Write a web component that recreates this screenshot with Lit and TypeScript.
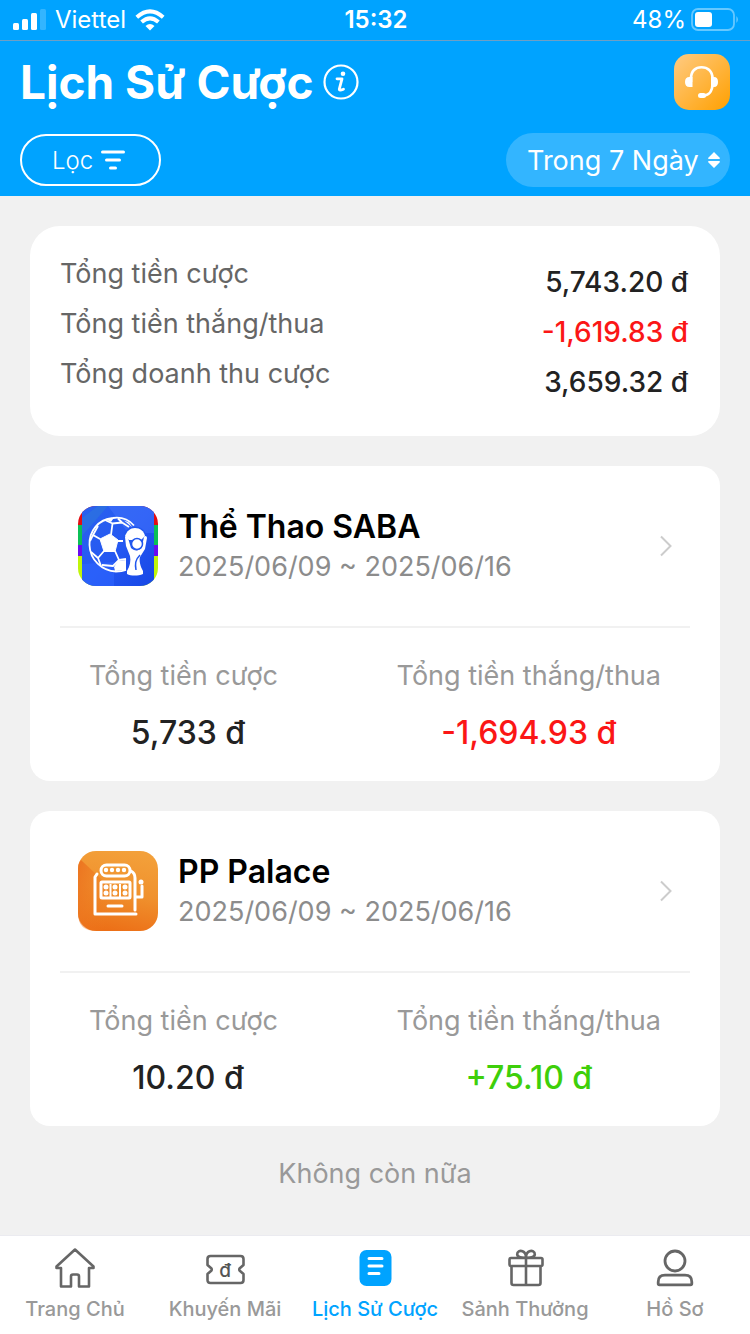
import { LitElement, html, css, TemplateResult } from "lit";
import { customElement, property, state } from "lit/decorators.js";
import { classMap } from "lit/directives/class-map.js";

type Tone = "plain" | "loss" | "win";

interface Amount {
  label: string;
  value: string;
  tone: Tone;
}

interface Provider {
  name: string;
  period: string;
  icon: TemplateResult;
  totals: Amount[];
}

interface Tab {
  label: string;
  icon: TemplateResult;
}

const sportsIcon = html`
  <svg viewBox="0 0 80 80" width="80" height="80" aria-hidden="true">
    <defs>
      <clipPath id="tile"><rect width="80" height="80" rx="18" /></clipPath>
      <linearGradient id="blue" x1="0" y1="0" x2="1" y2="1">
        <stop offset="0" stop-color="#2a62ee" />
        <stop offset="0.5" stop-color="#2558f2" />
        <stop offset="1" stop-color="#1747e6" />
      </linearGradient>
    </defs>
    <g clip-path="url(#tile)">
      <rect width="80" height="19" fill="#e30d12" />
      <rect y="19" width="80" height="20" fill="#0bc056" />
      <rect y="39" width="80" height="11" fill="#6a0bf0" />
      <rect y="50" width="80" height="30" fill="#c0f50a" />
      <path d="M4 0H76V80H4Z" fill="url(#blue)" />
      <path d="M4 12L20 0H30L4 30Z" fill="#2d7bd8" opacity=".5" />
      <path d="M30 0H76V27H50Z" fill="#4a7bff" opacity=".4" />
      <path d="M4 58L36 56V80H4Z" fill="#2f66ff" opacity=".6" />
    </g>
    <g fill="none" stroke="#fff" stroke-width="1.800" stroke-linejoin="round">
      <path d="M56 19.500C50 13 42 11 35 12C20 13.500 11 25 11.500 39C12 54 24 65 38 65.500Q44 65.500 48 64" />
      <path d="M33 29L34.500 17.500L27 14M34.500 17.500L44 16.500L51 21M44 16.500L40 12.500M22 33L15 29L12 35M15 29L20 20M26 45L20 52L13 46M20 52L23 60M37 45L41 54L35 60L24 59M41 54L48 53M39 35H45" />
    </g>
    <path d="M22 33L32 28L40 34L37 45.500H26Z" fill="#fff" stroke="#fff" stroke-linejoin="round" />
    <path d="M40 55L48 54V64L37 65L36 61ZM27 13L36 11.500L33 16ZM46 14.500L51 16.500L54 21Z" fill="#fff" />
    <circle cx="57" cy="32" r="11.500" fill="#2157ee" />
    <path d="M57 22C62 22 66 25 67 30L63 34H51L47 30C49 25 52 22 57 22Z" fill="#fff" />
    <path d="M47 31C47 30 50 30 50 32L53 42C57 46 62 45 64 40L66 31C67 29 69 30 69 32L67 43L62 51C61 54 62 60 65 65V68C60 70 53 70 49 68V65C52 60 53 55 52 50L48 40Z" fill="#fff" />
    <circle cx="59" cy="38" r="5.500" fill="#fff" stroke="#2157ee" stroke-width="1.500" />
    <path d="M62 49C57 54 57 58 58 64" stroke="#2157ee" stroke-width="1.500" fill="none" />
  </svg>
`;

const slotIcon = html`
  <svg viewBox="0 0 80 80" width="80" height="80" aria-hidden="true">
    <defs>
      <linearGradient id="orange" x1=".6" y1="0" x2=".4" y2="1">
        <stop offset="0" stop-color="#f3a03a" />
        <stop offset=".5" stop-color="#f0912d" />
        <stop offset="1" stop-color="#ec6f17" />
      </linearGradient>
      <linearGradient id="shade" x1="0" y1="0" x2="1" y2=".6">
        <stop offset="0" stop-color="#ec7420" />
        <stop offset="1" stop-color="#ee7d22" stop-opacity="0" />
      </linearGradient>
    </defs>
    <rect width="80" height="80" rx="18" fill="url(#orange)" />
    <path d="M3 9L36 40V80H18Q0 80 0 62V18Q0 12 3 9Z" fill="url(#shade)" />
    <g fill="none" stroke="#fff" stroke-width="3" stroke-linecap="round" stroke-linejoin="round">
      <rect x="23" y="14" width="29" height="11" rx="5.500" />
      <path d="M19 23L17 26V63H58M53 20Q57 22 57 27V59M58 46H64V35" />
      <rect x="23" y="31" width="29" height="16" rx="1" />
      <path d="M30 55H44" />
    </g>
    <g fill="#fff">
      <circle cx="63" cy="31" r="2.500" />
      <circle cx="28" cy="19" r="2.200" /><circle cx="34" cy="19" r="2.200" />
      <circle cx="40" cy="19" r="2.200" /><circle cx="46" cy="19" r="2.200" />
      <circle cx="28" cy="36" r="2.500" /><circle cx="37" cy="36" r="2.500" /><circle cx="47" cy="36" r="2.500" />
      <circle cx="28" cy="42" r="2.500" /><circle cx="37" cy="42" r="2.500" /><circle cx="47" cy="42" r="2.500" />
      <path d="M31.500 33H33.500V46H31.500ZM41 33H43V46H41Z" />
    </g>
  </svg>
`;

const homeIcon = html`
  <svg viewBox="0 0 40 40" width="40" height="40" fill="none" stroke="#666" stroke-width="2.600" stroke-linejoin="round" aria-hidden="true">
    <path d="M20 1.500L1.500 18.500V20H6V38.500H16V28.500Q16 26.500 18 26.500H22Q24 26.500 24 28.500V38.500H34V20H38.500V18.500Z" />
  </svg>
`;

const couponIcon = html`
  <svg viewBox="0 0 40 40" width="40" height="40" aria-hidden="true">
    <path d="M5.500 8H35.500Q38.500 8 38.500 11V17L34.500 20.500Q34 21.500 34.500 22.500L38.500 26V32Q38.500 35 35.500 35H5.500Q2.500 35 2.500 32V26L6.500 22.500Q7 21.500 6.500 20.500L2.500 17V11Q2.500 8 5.500 8Z" fill="none" stroke="#666" stroke-width="2.600" stroke-linejoin="round" />
    <text x="20" y="29" text-anchor="middle" font-family="Inter, sans-serif" font-size="19" font-weight="500" fill="#555">đ</text>
  </svg>
`;

const historyIcon = html`
  <svg viewBox="0 0 40 40" width="40" height="40" aria-hidden="true">
    <rect x="4.500" y="2" width="32" height="36" rx="7" fill="#00a3ff" />
    <path d="M14 10.500H27M14 18H27M14 25.500H24" stroke="#fff" stroke-width="3" stroke-linecap="round" />
  </svg>
`;

const giftIcon = html`
  <svg viewBox="0 0 40 40" width="40" height="40" fill="none" stroke="#666" stroke-width="2.600" stroke-linejoin="round" aria-hidden="true">
    <rect x="4.500" y="10" width="33" height="8" rx="1.500" />
    <path d="M6.500 18V35Q6.500 37 8.500 37H33.500Q35.500 37 35.500 35V18M21 10V37" />
    <path d="M21 9.500C17 10 12.500 9.500 12.200 6.500C12 3.500 15 2.200 17.500 3.200C20 4.200 21 7 21 9.500C21 7 22 4.200 24.500 3.200C27 2.200 30 3.500 29.800 6.500C29.500 9.500 25 10 21 9.500Z" />
  </svg>
`;

const profileIcon = html`
  <svg viewBox="0 0 40 40" width="40" height="40" fill="none" stroke="#666" stroke-width="2.800" stroke-linejoin="round" aria-hidden="true">
    <circle cx="20" cy="13" r="10" />
    <path d="M10 27.200H30Q36.800 27.200 36.800 34V35.500Q36.800 36.800 35.500 36.800H4.500Q3.200 36.800 3.200 35.500V34Q3.200 27.200 10 27.200Z" />
  </svg>
`;

@customElement("phone-status")
class PhoneStatus extends LitElement {
  static styles = css`
    :host {
      display: grid;
      grid-template-columns: 1fr auto 1fr;
      align-items: center;
      height: 40px;
      padding: 0 11px 0 13px;
      border-bottom: 1px solid #6f9fc4;
      font-size: 24px;
      line-height: 30px;
      font-weight: 400;
    }
    .side {
      display: flex;
      align-items: center;
      gap: 9px;
    }
    .end {
      justify-content: flex-end;
      gap: 5px;
    }
    .clock {
      font-weight: 600;
    }
  `;

  render() {
    return html`
      <div class="side">
        <svg viewBox="0 0 33 22" width="33" height="22" fill="#fff" aria-hidden="true">
          <rect y="14" width="6" height="7" rx="1.500" />
          <rect x="9" y="10" width="6" height="11" rx="1.500" />
          <rect x="18" y="4" width="6" height="17" rx="1.500" />
          <rect x="27" y="0" width="6" height="21" rx="1.500" opacity=".2" />
        </svg>
        <span>Viettel</span>
        <svg viewBox="0 0 30 22" width="30" height="22" aria-hidden="true">
          <g fill="none" stroke="#fff" stroke-width="4">
            <path d="M1.800 8.200Q15 -3.600 28.200 8.200" />
            <path d="M6.600 13Q15 5.600 23.400 13" />
          </g>
          <path d="M10.500 17Q15 13.200 19.500 17L15 21.500Z" fill="#fff" />
        </svg>
      </div>
      <span class="clock">15:32</span>
      <div class="side end">
        <span>48%</span>
        <svg viewBox="0 0 48 24" width="48" height="24" aria-hidden="true">
          <rect x="1" y="1" width="42" height="21" rx="6" fill="none" stroke="#fff" stroke-width="1.800" opacity=".4" />
          <rect x="4" y="4" width="17" height="15" rx="3" fill="#fff" />
          <path d="M45.500 8Q48 11.500 45.500 15Z" fill="#fff" opacity=".5" />
        </svg>
      </div>
    `;
  }
}

@customElement("provider-card")
class ProviderCard extends LitElement {
  @property({ attribute: false }) provider!: Provider;

  static styles = css`
    :host {
      display: block;
      background: #fff;
      border-radius: 20px;
      padding: 0 30px 20px;
    }
    .head {
      display: flex;
      align-items: center;
      gap: 20px;
      padding: 40px 18px;
      border-bottom: 2px solid #f1f1f1;
      color: inherit;
      text-decoration: none;
    }
    .icon svg,
    .arrow {
      display: block;
    }
    .text {
      flex: 1;
      padding-top: 2px;
    }
    h2 {
      margin: 0;
      font-size: 32px;
      line-height: 40px;
      font-weight: 600;
      color: #000;
    }
    .period {
      margin: 0;
      font-size: 27px;
      line-height: 40px;
      color: #8c8c8c;
    }
    .head {
      height: 80px;
    }
    .totals {
      display: flex;
      justify-content: space-between;
      margin: 0;
      padding: 20px 29px 0;
    }
    .total {
      min-width: 198px;
    }
    dt {
      font-size: 27px;
      line-height: 56px;
      color: #999;
    }
    dd {
      margin: 0;
      font-size: 32px;
      line-height: 57px;
      font-weight: 500;
      text-align: center;
      color: #222;
    }
    .loss {
      color: #fb1616;
    }
    .win {
      color: #3ecf0a;
    }
  `;

  render() {
    const { name, period, icon, totals } = this.provider;
    return html`
      <a class="head" href="#">
        <span class="icon">${icon}</span>
        <div class="text">
          <h2>${name}</h2>
          <p class="period">${period}</p>
        </div>
        <svg class="arrow" viewBox="0 0 12 22" width="12" height="22" fill="none" stroke="#ccc" stroke-width="2" aria-hidden="true">
          <path d="M1 1.500L10.500 11L1 20.500" />
        </svg>
      </a>
      <dl class="totals">
        ${totals.map(
          (t) => html`
            <div class="total">
              <dt>${t.label}</dt>
              <dd class=${t.tone}>${t.value}</dd>
            </div>
          `
        )}
      </dl>
    `;
  }
}

@customElement("tab-bar")
class TabBar extends LitElement {
  @property({ attribute: false }) tabs: Tab[] = [];
  @property({ type: Number }) active = 0;

  static styles = css`
    nav {
      display: grid;
      grid-template-columns: repeat(5, 1fr);
      padding: 12px 0 13px;
      border-top: 1px solid #ebebf0;
      background: #fff;
    }
    .tab {
      display: flex;
      flex-direction: column;
      align-items: center;
      gap: 9px;
      font-size: 20px;
      line-height: 24px;
      font-weight: 500;
      white-space: nowrap;
      color: #999;
      text-decoration: none;
    }
    .active {
      color: #00a3ff;
    }
  `;

  render() {
    return html`
      <nav>
        ${this.tabs.map(
          (tab, i) => html`
            <a class=${classMap({ tab: true, active: i === this.active })} href="#">
              ${tab.icon}
              <span>${tab.label}</span>
            </a>
          `
        )}
      </nav>
    `;
  }
}

@customElement("app-root")
class AppRoot extends LitElement {
  @state() private summary: Amount[] = [
    { label: "Tổng tiền cược", value: "5,743.20 đ", tone: "plain" },
    { label: "Tổng tiền thắng/thua", value: "-1,619.83 đ", tone: "loss" },
    { label: "Tổng doanh thu cược", value: "3,659.32 đ", tone: "plain" },
  ];

  @state() private providers: Provider[] = [
    {
      name: "Thể Thao SABA",
      period: "2025/06/09 ~ 2025/06/16",
      icon: sportsIcon,
      totals: [
        { label: "Tổng tiền cược", value: "5,733 đ", tone: "plain" },
        { label: "Tổng tiền thắng/thua", value: "-1,694.93 đ", tone: "loss" },
      ],
    },
    {
      name: "PP Palace",
      period: "2025/06/09 ~ 2025/06/16",
      icon: slotIcon,
      totals: [
        { label: "Tổng tiền cược", value: "10.20 đ", tone: "plain" },
        { label: "Tổng tiền thắng/thua", value: "+75.10 đ", tone: "win" },
      ],
    },
  ];

  private tabs: Tab[] = [
    { label: "Trang Chủ", icon: homeIcon },
    { label: "Khuyến Mãi", icon: couponIcon },
    { label: "Lịch Sử Cược", icon: historyIcon },
    { label: "Sảnh Thưởng", icon: giftIcon },
    { label: "Hồ Sơ", icon: profileIcon },
  ];

  static styles = css`
    :host {
      display: flex;
      flex-direction: column;
      min-height: 100vh;
      background: #f1f1f1;
      font-family: Inter, "Noto Sans", sans-serif;
    }
    .top {
      background: #00a3ff;
      color: #fff;
    }
    .bar {
      display: flex;
      align-items: center;
      justify-content: space-between;
      padding: 13px 20px 0;
    }
    .filters {
      padding: 23px 20px 9px;
    }
    .heading {
      display: flex;
      align-items: center;
      gap: 10px;
    }
    h1 {
      margin: 0;
      font-size: 46px;
      line-height: 56px;
      font-weight: 700;
    }
    button {
      padding: 0;
      border: 0;
      background: none;
      color: inherit;
      font: inherit;
      cursor: pointer;
    }
    button svg {
      display: block;
    }
    .filter {
      display: flex;
      align-items: center;
      gap: 8px;
      height: 52px;
      padding: 0 34px 0 30px;
      border: 2px solid #fff;
      border-radius: 26px;
      font-size: 24px;
      font-weight: 300;
    }
    .range {
      display: flex;
      align-items: center;
      gap: 9px;
      height: 54px;
      padding: 0 10px 0 21px;
      border-radius: 27px;
      background: #33b5ff;
    }
    select {
      appearance: none;
      padding: 2px 0 0;
      border: 0;
      background: none;
      color: inherit;
      font-family: inherit;
      font-size: 27px;
      line-height: 40px;
    }
    main {
      flex: 1;
      display: flex;
      flex-direction: column;
      gap: 30px;
      padding: 30px 30px 0;
    }
    .summary {
      display: grid;
      grid-template-columns: auto auto;
      grid-auto-rows: 50px;
      justify-content: space-between;
      margin: 0;
      padding: 23px 32px 37px 30px;
      border-radius: 30px;
      background: #fff;
    }
    dt {
      font-size: 27px;
      line-height: 50px;
      color: #666;
    }
    dd {
      margin: 0;
      padding-top: 16px;
      font-size: 28px;
      line-height: 34px;
      font-weight: 500;
      text-align: right;
      color: #222;
    }
    .loss {
      color: #fb1616;
    }
    .end {
      margin: 0;
      font-size: 27px;
      line-height: 36px;
      text-align: center;
      color: #999;
    }
  `;

  render() {
    return html`
      <header class="top">
        <phone-status></phone-status>
        <div class="bar">
          <div class="heading">
            <h1>Lịch Sử Cược</h1>
            <button aria-label="Thông tin">
              <svg viewBox="0 0 36 36" width="36" height="36" aria-hidden="true">
                <circle cx="18" cy="18" r="16.500" fill="none" stroke="#fff" stroke-width="2.200" />
                <path d="M14 14.800H19L16.300 25Q16 27 20.500 25.300" fill="none" stroke="#fff" stroke-width="2.800" stroke-linejoin="round" stroke-linecap="round" />
                <circle cx="20" cy="9.800" r="2.300" fill="#fff" />
              </svg>
            </button>
          </div>
          <button aria-label="Hỗ trợ">
            <svg viewBox="0 0 56 56" width="56" height="56" aria-hidden="true">
              <defs>
                <linearGradient id="amber" x1="0" y1="0" x2="1" y2="1">
                  <stop offset="0" stop-color="#ffcb83" />
                  <stop offset="1" stop-color="#ffa000" />
                </linearGradient>
              </defs>
              <rect width="56" height="56" rx="15" fill="url(#amber)" />
              <path d="M17 28V24.500C17 17 21.500 13.200 27.500 13.200C33.500 13.200 38.500 17 38.500 24.500V30C38.500 37.500 34.500 41.500 29 41.500" fill="none" stroke="#fff" stroke-width="2.600" />
              <path d="M18.500 23V33H15.500Q11 33 11 28Q11 23 15.500 23ZM37 23H40Q44 23 44 28Q44 33 40 33H37Z" fill="#fff" />
              <rect x="24" y="39" width="8" height="5" rx="2.500" fill="#fff" />
            </svg>
          </button>
        </div>
        <div class="bar filters">
          <button class="filter">
            <span>Lọc</span>
            <svg viewBox="0 0 24 20" width="24" height="20" stroke="#fff" stroke-width="3" stroke-linecap="round" aria-hidden="true">
              <path d="M1.500 2H22.500M5.500 10H18.500M9.500 18H14.500" />
            </svg>
          </button>
          <label class="range">
            <select aria-label="Khoảng thời gian">
              <option>Trong 7 Ngày</option>
            </select>
            <svg viewBox="0 0 12 16" width="12" height="16" fill="#fff" aria-hidden="true">
              <path d="M6 0L12 6Q12 7 11 7H1Q0 7 0 6ZM6 16L12 10Q12 9 11 9H1Q0 9 0 10Z" />
            </svg>
          </label>
        </div>
      </header>
      <main>
        <dl class="summary">
          ${this.summary.map(
            (row) => html`
              <dt>${row.label}</dt>
              <dd class=${row.tone}>${row.value}</dd>
            `
          )}
        </dl>
        ${this.providers.map((p) => html`<provider-card .provider=${p}></provider-card>`)}
        <p class="end">Không còn nữa</p>
      </main>
      <tab-bar .tabs=${this.tabs} .active=${2}></tab-bar>
    `;
  }
}
